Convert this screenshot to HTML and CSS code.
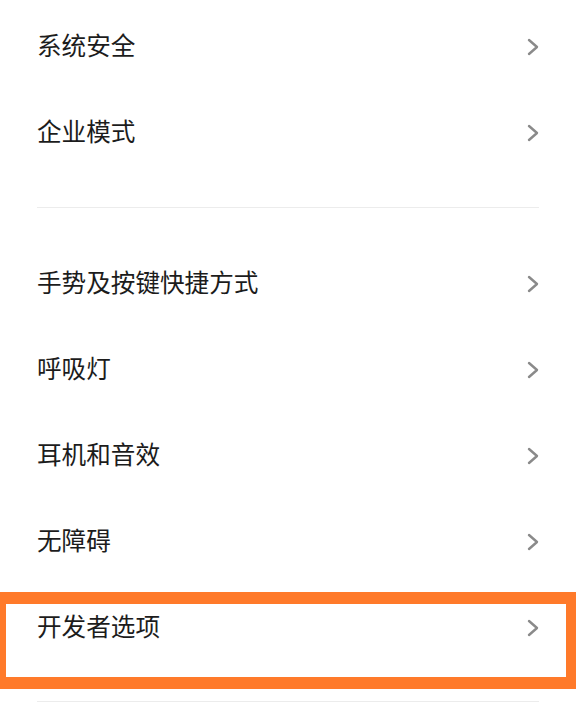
FILE: index.html
```html
<!DOCTYPE html>
<html lang="zh-CN">
<head>
    <meta charset="UTF-8">
    <meta name="viewport" content="width=device-width, initial-scale=1.0">
    <title>设置</title>
    <link rel="stylesheet" href="styles.css">
</head>
<body>
    <div class="settings">
        <ul class="group">
            <li class="item">
                <span class="item-text">系统安全</span>
                <svg class="chevron" viewBox="0 0 12 18"><polyline points="2,2 10,9 2,16"/></svg>
            </li>
            <li class="item">
                <span class="item-text">企业模式</span>
                <svg class="chevron" viewBox="0 0 12 18"><polyline points="2,2 10,9 2,16"/></svg>
            </li>
        </ul>

        <hr class="divider">

        <ul class="group group-second">
            <li class="item">
                <span class="item-text">手势及按键快捷方式</span>
                <svg class="chevron" viewBox="0 0 12 18"><polyline points="2,2 10,9 2,16"/></svg>
            </li>
            <li class="item">
                <span class="item-text">呼吸灯</span>
                <svg class="chevron" viewBox="0 0 12 18"><polyline points="2,2 10,9 2,16"/></svg>
            </li>
            <li class="item">
                <span class="item-text">耳机和音效</span>
                <svg class="chevron" viewBox="0 0 12 18"><polyline points="2,2 10,9 2,16"/></svg>
            </li>
            <li class="item">
                <span class="item-text">无障碍</span>
                <svg class="chevron" viewBox="0 0 12 18"><polyline points="2,2 10,9 2,16"/></svg>
            </li>
            <li class="item highlighted">
                <span class="item-text">开发者选项</span>
                <svg class="chevron" viewBox="0 0 12 18"><polyline points="2,2 10,9 2,16"/></svg>
            </li>
        </ul>

        <hr class="divider divider-last">
    </div>
</body>
</html>
```

FILE: styles.css
```css
body {
    margin: 0;
    background-color: #ffffff;
    font-family: "Noto Sans CJK SC", "Noto Sans", sans-serif;
    color: #1c1c1c;
}

.settings {
    padding-top: 4px;
}

.group {
    list-style-type: none;
    margin: 0;
    padding: 0;
}

.group-second {
    margin-top: 33px;
}

.item {
    position: relative;
    display: flex;
    align-items: center;
    justify-content: space-between;
    height: 86px;
    padding: 0 37px;
}

.item-text {
    font-size: 24.6px;
    line-height: 1;
    padding-bottom: 5px;
}

.chevron {
    width: 12px;
    height: 18px;
}

.chevron polyline {
    fill: none;
    stroke: #8a8a8a;
    stroke-width: 2.4;
    stroke-linecap: round;
    stroke-linejoin: round;
}

.divider {
    border: none;
    border-top: 1px solid #ececec;
    margin: 31px 37px 0;
}

.divider-last {
    margin-top: 30px;
}

/* orange highlight box drawn over the row */
.highlighted::after {
    content: "";
    position: absolute;
    left: -6px;
    right: 0;
    top: 7px;
    height: 73px;
    border: 12px solid #ff7a2a;
    border-right-width: 10px;
}
```
